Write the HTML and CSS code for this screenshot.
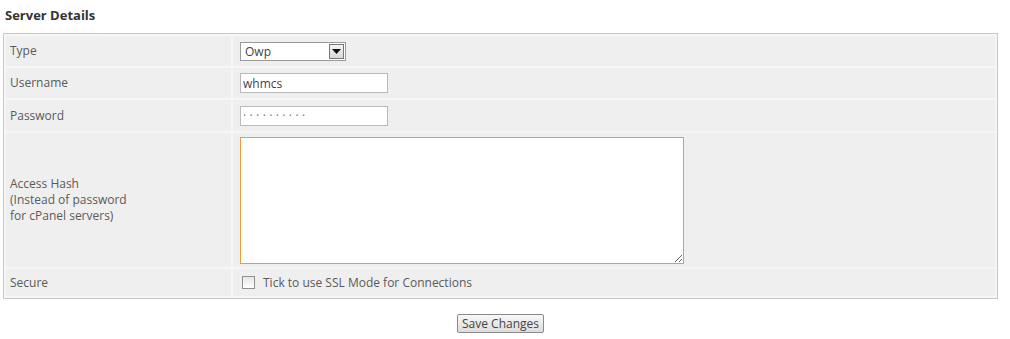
FILE: index.html
```html
<!DOCTYPE html>
<html>
<head>
<meta charset="utf-8">
<link rel="stylesheet" href="styles.css">
</head>
<body>
<div class="page">
  <h2 class="title">Server Details</h2>
  <table class="form">
    <tr class="row">
      <td class="label">Type</td>
      <td class="field">
        <div class="select">
          <span class="select-value">Owp</span>
          <span class="select-btn">
            <svg width="9" height="5" viewBox="0 0 9 5"><path d="M0 0h9L4.5 5z" fill="#111"/></svg>
          </span>
        </div>
      </td>
    </tr>
    <tr class="row">
      <td class="label">Username</td>
      <td class="field"><input class="text" type="text" value="whmcs"></td>
    </tr>
    <tr class="row row-pw">
      <td class="label">Password</td>
      <td class="field"><input class="text pw" type="text" value="··········"></td>
    </tr>
    <tr class="row-tall">
      <td class="label">Access Hash<br>(Instead of password<br>for cPanel servers)</td>
      <td class="field"><textarea class="hash"></textarea></td>
    </tr>
    <tr class="row-short">
      <td class="label">Secure</td>
      <td class="field"><label class="check"><span class="box"></span>Tick to use SSL Mode for Connections</label></td>
    </tr>
  </table>
  <div class="actions"><button class="btn">Save Changes</button></div>
</div>
</body>
</html>
```
FILE: styles.css
```css
html, body { margin: 0; padding: 0; background: #fff; }
body { font-family: "Open Sans", "DejaVu Sans", sans-serif; font-size: 12px; color: #5a5a5a; }
.page { width: 995px; padding: 0 0 0 3px; }
.title { margin: 0; padding: 6px 0 0 2px; height: 33px; box-sizing: border-box; font-size: 13px; font-weight: bold; color: #333; }
.form { width: 995px; border: 1px solid #c8c8c8; border-spacing: 2px; background: #f6f6f6; }
.form td { background: #efefef; padding: 0 6px; vertical-align: middle; }
.form td.label { width: 215px; color: #5a5a5a; line-height: 16px; padding-left: 4px; }
.row td { height: 30px; }
.row-pw td { height: 31px; }
.row-tall td { height: 134px; }
.row-short td { height: 27px; }
.field { padding-left: 7px !important; }
.select { display: flex; width: 106px; height: 19px; box-sizing: border-box; border: 1px solid #9a9a9a; background: #fff; }
.select-value { flex: 1; padding-left: 4px; line-height: 17px; color: #444; font-size: 12px; }
.select-btn { width: 15px; box-sizing: border-box; border: 1px solid #777; margin: 1px; background: linear-gradient(#f4f4f4, #d8d8d8); display: flex; align-items: center; justify-content: center; }
.text { width: 148px; height: 20px; box-sizing: border-box; border: 1px solid #b9b9b9; padding: 0 2px; font: 12px "Open Sans", sans-serif; color: #444; background: #fff; display: block; }
.pw { letter-spacing: 3.4px; color: #777; font-size: 12px; }
.hash { width: 444px; height: 127px; box-sizing: border-box; border: 1px solid #e3a13b; display: block; background: #fff; margin: 0; }
.check { display: flex; align-items: center; font-size: 12px; color: #5a5a5a; }
.box { width: 11px; height: 11px; border: 1px solid #8f8f8f; background: linear-gradient(#e6e6e6, #fff); margin: 0 8px 0 2px; }
.actions { display: flex; justify-content: center; padding-top: 15px; }
.btn { font: 12px "Open Sans", sans-serif; color: #444; height: 19px; padding: 0 4px; border: 1px solid #8a8a8a; border-radius: 2px; background: linear-gradient(#f8f8f8, #dcdcdc); line-height: 15px; }
```
